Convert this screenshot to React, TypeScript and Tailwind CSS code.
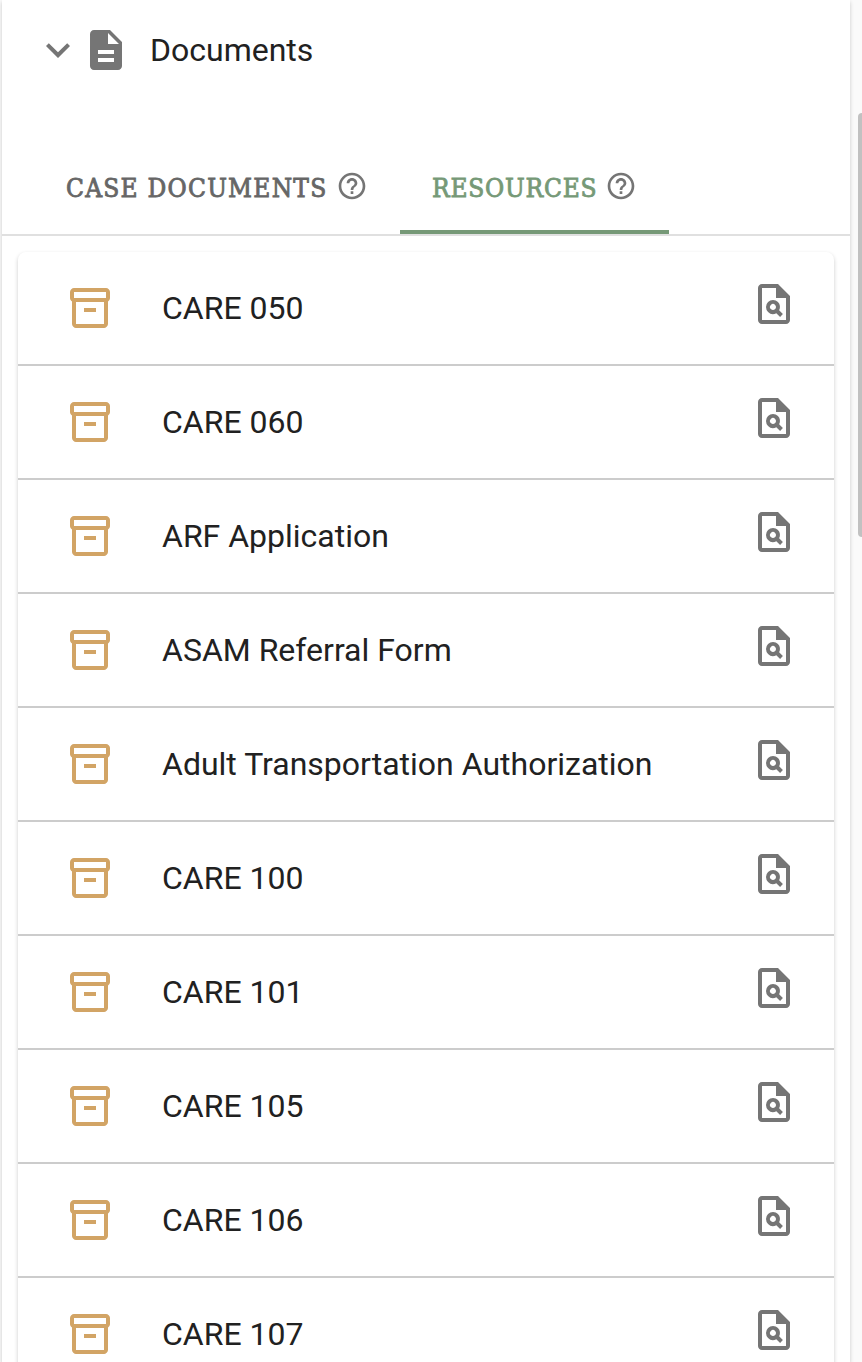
// src/components/DocumentsPanel.tsx
import React from "react";
import {
  MdDescription,
  MdExpandMore,
  MdHelpOutline,
  MdOutlineInventory2,
  MdOutlinePlagiarism,
} from "react-icons/md";

const resources = [
  "CARE 050",
  "CARE 060",
  "ARF Application",
  "ASAM Referral Form",
  "Adult Transportation Authorization",
  "CARE 100",
  "CARE 101",
  "CARE 105",
  "CARE 106",
  "CARE 107",
];

function Tabs() {
  return (
    <div className="flex h-[98px] border-b-2 border-[#e0e0e0] pl-8 font-['Roboto_Slab','DejaVu_Serif',serif] text-[26px] leading-8 font-medium [font-stretch:condensed]">
      <button className="flex h-24 w-[366px] items-center pl-8 text-[#666666]">
        <span className="w-[270px] pt-1 text-left tracking-[1.25px] whitespace-nowrap [-webkit-text-stroke:0.8px_currentColor]">
          CASE DOCUMENTS
        </span>
        <MdHelpOutline className="size-8 shrink-0 text-[#757575]" />
      </button>
      <button className="flex h-24 w-[269px] items-center border-b-4 border-[#769977] pt-1 pl-8 text-[#769977]">
        <span className="w-[173px] pt-1 text-left tracking-[0.8px] whitespace-nowrap [-webkit-text-stroke:0.8px_currentColor]">
          RESOURCES
        </span>
        <MdHelpOutline className="size-8 shrink-0 text-[#757575]" />
      </button>
    </div>
  );
}

export default function App() {
  return (
    <div className="flex h-[1362px] overflow-hidden bg-[#fafafa] font-['Roboto',sans-serif] text-[#212121]">
      <main className="ml-0.5 w-[848px] shrink-0 bg-white shadow-[0_2px_4px_rgba(0,0,0,0.2)]">
        <header className="flex h-[100px] items-center pl-8">
          <MdExpandMore className="size-12 text-[#757575]" />
          <MdDescription className="size-12 text-[#757575]" />
          <h1 className="ml-5 text-[32px] leading-12">Documents</h1>
        </header>

        <div className="pt-[38px]">
          <Tabs />
        </div>

        {/* resource list */}
        <ul className="mx-4 mt-4 rounded-lg bg-white shadow-[0_2px_4px_rgba(0,0,0,0.2)]">
          {resources.map((name) => (
            <li
              key={name}
              className="flex h-[114px] items-center border-b-2 border-[#cccccc] pr-9 pl-12"
            >
              <MdOutlineInventory2 className="size-12 shrink-0 text-[#d2a465]" />
              <span className="ml-12 flex-1 text-[32px] leading-12">{name}</span>
              <MdOutlinePlagiarism className="mb-[9px] size-12 shrink-0 text-[#757575]" />
            </li>
          ))}
        </ul>
      </main>

      {/* scrollbar */}
      <div className="mt-[113px] ml-auto h-[424px] w-1 shrink-0 self-start rounded-l-full bg-[#c1c1c1]" />
    </div>
  );
}
